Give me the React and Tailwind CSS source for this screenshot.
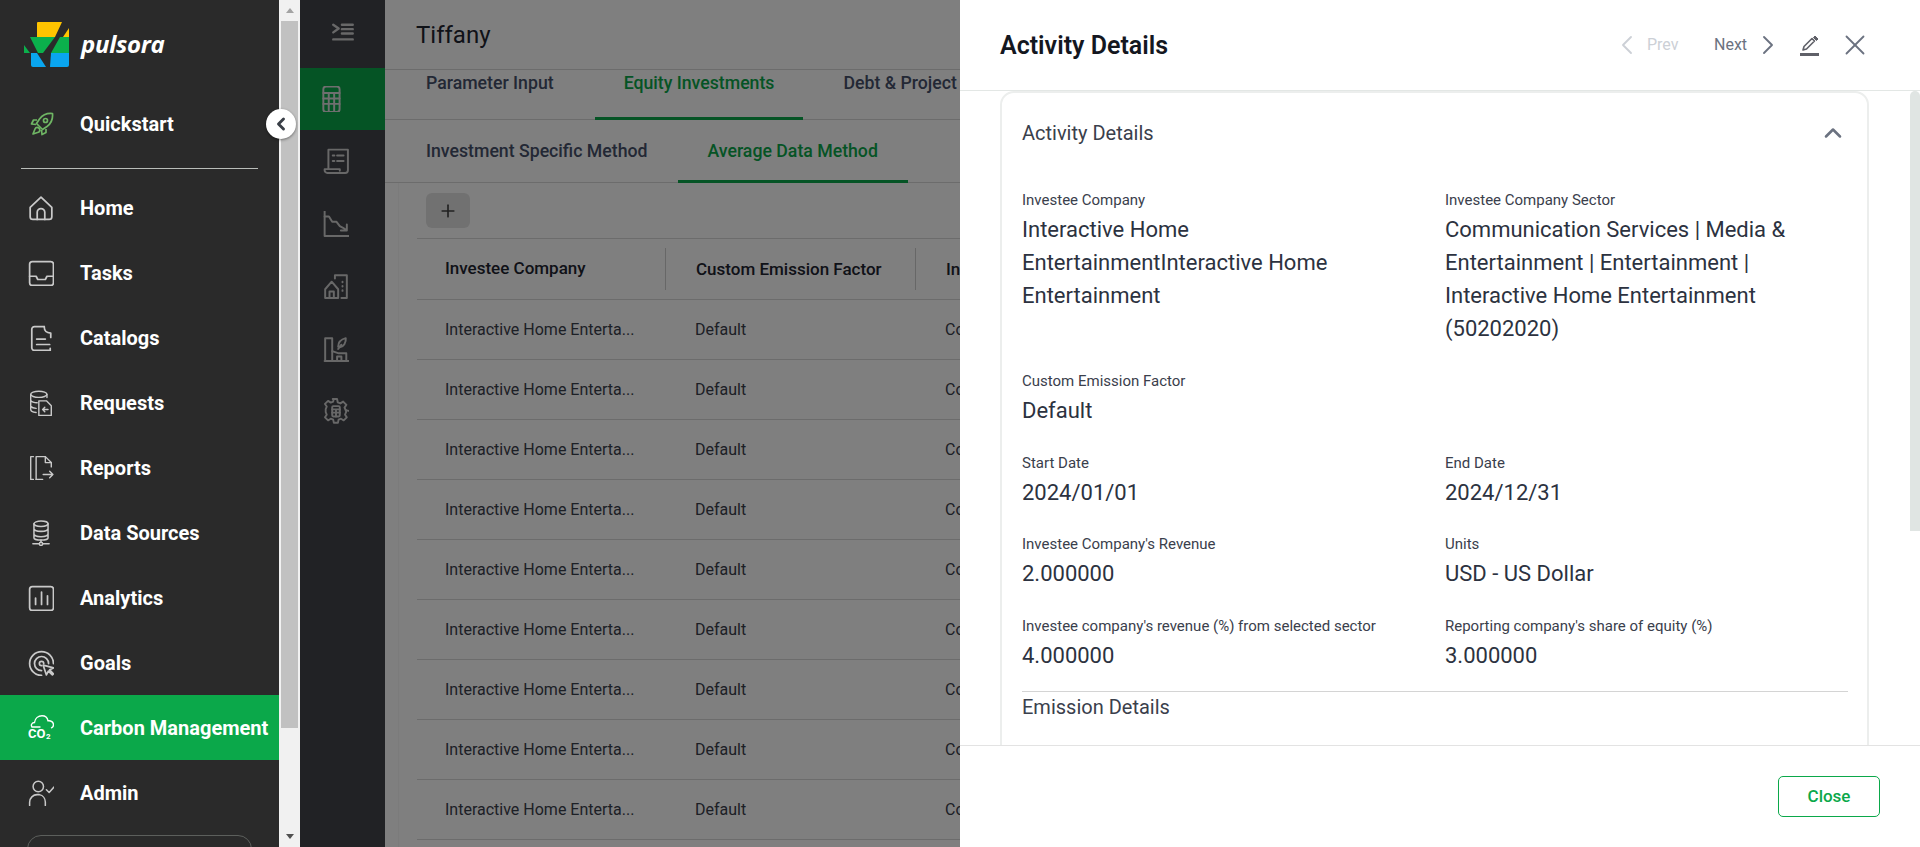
import React from "react";
import { ChevronLeft, ChevronRight, ChevronUp, Plus, X } from "lucide-react";

// sidebar icons, drawn on a 24 box
const Svg = ({ children, className = "w-[26px] h-[26px]", sw = 1.6 }) => (
  <svg viewBox="0 0 24 24" fill="none" stroke="currentColor" strokeWidth={sw} strokeLinecap="round" strokeLinejoin="round" className={className}>
    {children}
  </svg>
);

const navItems = [
  {
    label: "Home",
    icon: (
      <Svg>
        <path d="M2 11.500 12 2l10 9.500V20a2.500 2.500 0 0 1-2.500 2.500h-15A2.500 2.500 0 0 1 2 20z" />
        <path d="M8.500 22.500V16a3.500 3.500 0 0 1 7 0v6.500" />
      </Svg>
    ),
  },
  {
    label: "Tasks",
    icon: (
      <Svg>
        <rect x="1.500" y="1.500" width="22" height="22" rx="2.500" />
        <path d="M1.500 15h6l1.500 3h7l1.500-3h6" />
      </Svg>
    ),
  },
  {
    label: "Catalogs",
    icon: (
      <Svg>
        <path d="M15 1.500H6A2.500 2.500 0 0 0 3.500 4v17A2.500 2.500 0 0 0 6 23.500h14.500" />
        <path d="M15 1.500c0 4 1.500 5.500 6 6v4M20.500 21.500v2" />
        <path d="M8 13h8M8 18h12" />
      </Svg>
    ),
  },
  {
    label: "Requests",
    icon: (
      <Svg sw={1.3}>
        <ellipse cx="10" cy="4" rx="7.500" ry="2.800" />
        <path d="M2.500 4v14c0 1.500 2 2.500 5 2.800M17.500 4v3M2.500 9.500c1 1.500 3 2.200 6 2.200M2.500 15c1 1.200 2.500 1.800 5 2" />
        <path d="M10 10h7l4.500 4.500V23.500H10z" />
        <path d="M18.500 18h-5l2-2M13.500 18l2 2" />
      </Svg>
    ),
  },
  {
    label: "Reports",
    icon: (
      <Svg sw={1.3}>
        <path d="M5 1.500H2.500v21H5" />
        <path d="M7.500 22.500V1.500H16l5.500 5.500v4" />
        <path d="M16 1.500V7h5.500M7.500 22.500h6" />
        <path d="M14 18h9M20 15l3 3-3 3" />
      </Svg>
    ),
  },
  {
    label: "Data Sources",
    icon: (
      <Svg sw={1.4}>
        <ellipse cx="12" cy="3.500" rx="6.500" ry="2.500" />
        <path d="M5.500 3.500v13c0 1 3 2 6.500 2s6.500-1 6.500-2v-13M5.500 8c0 1.400 3 2.500 6.500 2.500s6.500-1.100 6.500-2.500M5.500 13c0 1.400 3 2.500 6.500 2.500s6.500-1.100 6.500-2.500" />
        <path d="M12 18.500v2" />
        <circle cx="12" cy="22" r="1.500" />
        <path d="M4.500 22h6M13.500 22h6" />
      </Svg>
    ),
  },
  {
    label: "Analytics",
    icon: (
      <Svg>
        <rect x="1.500" y="1.500" width="22" height="22" rx="2.500" />
        <path d="M7 18v-6M12.500 18V6.500M18 18v-8" />
      </Svg>
    ),
  },
  {
    label: "Goals",
    icon: (
      <Svg>
        <path d="M12.500 23.500a11 11 0 1 1 11-11" />
        <path d="M12.500 19a6.500 6.500 0 1 1 6.500-6.500" />
        <path d="M12.500 14.500a2 2 0 1 1 2-2" />
        <path d="M14 14l3 9 1.800-3.500 3.700 3.500 1-1-3.500-3.700 3.500-1.800z" fill="#2a2a2a" />
      </Svg>
    ),
  },
  {
    label: "Carbon Management",
    active: true,
    icon: (
      <svg viewBox="0 0 26 26" fill="none" className="w-[26px] h-[26px]">
        <path d="M4 12c-1.500-2 0-4.500 2.500-4.500C7 3 10.500 .8 14 .8c3 0 5.500 2 6 5 3-.5 5.500 1.500 5.500 4 0 1.500-.8 2.500-2 3M4 12h8" stroke="white" strokeWidth="1.400" strokeLinecap="round" />
        <text x="0" y="23" fill="white" fontFamily="Roboto" fontWeight="700" fontSize="13">CO</text>
        <text x="18" y="24" fill="white" fontFamily="Roboto" fontWeight="700" fontSize="8">2</text>
      </svg>
    ),
  },
  {
    label: "Admin",
    icon: (
      <Svg sw={1.4}>
        <circle cx="9.500" cy="6" r="4.800" />
        <path d="M1.500 23.500v-3A7 7 0 0 1 8.500 13.500h2a7 7 0 0 1 5.500 7v3" />
        <path d="M17 9l2.500 2.500L24 6.500" />
      </Svg>
    ),
  },
];

const rows = Array.from({ length: 9 });

const Field = ({ label, value, className = "" }) => (
  <div className={className}>
    <div className="text-[15px] leading-[20px] text-[#3a404c]">{label}</div>
    <div className="text-[22px] leading-[33px] text-[#2c3240] mt-[3px]">{value}</div>
  </div>
);

const Sidebar = () => (
  <aside className="relative flex w-[300px] shrink-0 h-full bg-[#2a2a2a] font-['Roboto',sans-serif]">
    <div className="w-[279px] h-full overflow-hidden">
      <div className="flex items-center h-[91px] pl-[24px] pb-[2px] gap-[11px]">
        <svg viewBox="0 0 46 46" className="w-[46px] h-[46px]">
          <path d="M14 0h24l-7 15H13V1a1 1 0 0 1 1-1z" fill="#ffc400" />
          <path d="M39 15l6-9v9z" fill="#ffc400" />
          <path d="M6 15h25L19 31h-5z" fill="#0bb04c" />
          <path d="M36 15h9v16H27z" fill="#0bb04c" />
          <path d="M0 23l6 8H0z" fill="#0bb04c" />
          <path d="M7 31h6l9 14H9a2 2 0 0 1-2-2z" fill="#0aa5ef" />
          <path d="M27 31h18v12a2 2 0 0 1-2 2H26z" fill="#0aa5ef" />
        </svg>
        <span className="text-white text-[24px] font-bold italic tracking-[-0.3px] font-['Open_Sans',sans-serif] -mt-[2px]">pulsora</span>
      </div>
      <div className="flex items-center h-[65px] pl-[30px] gap-[26px]">
        <svg viewBox="0 0 24 24" fill="none" stroke="#6fb564" strokeWidth="1.700" strokeLinejoin="round" className="w-[24px] h-[24px]">
          <path d="M22.500 1.500c-5-.5-10 1.500-13 5.500l-3 4.500 6 6 4.500-3c4-3 6-8 5.500-13z" />
          <circle cx="15.500" cy="8.500" r="2" />
          <path d="M7 8H3.500L1.500 12l4.500.5M16 17v3.500l-4 2-.5-4.500M5 17a2.500 2.500 0 1 1 2.500 3.500L3 22z" />
        </svg>
        <span className="text-white text-[20px] font-bold">Quickstart</span>
      </div>
      <div className="mx-[21px] mt-[12px] mb-[6px] border-t border-[#b9bdb9]" />
      {navItems.map((item) => (
        <div key={item.label} className={`flex items-center h-[65px] pl-[28px] gap-[26px] text-[#c9c9c9] ${item.active ? "bg-[#0ba84a]" : ""}`}>
          {item.icon}
          <span className="text-white text-[20px] font-bold whitespace-nowrap">{item.label}</span>
        </div>
      ))}
      <div className="mx-[27px] mt-[10px] h-[40px] rounded-[14px] border border-[#5c5f5c]" />
    </div>

    {/* page scrollbar */}
    <div className="flex flex-col items-center w-[21px] h-full bg-[#f1f1f1]">
      <div className="h-[21px] w-full flex items-center justify-center">
        <div className="w-0 h-0 border-x-[4px] border-x-transparent border-b-[5px] border-b-[#a3a3a3]" />
      </div>
      <div className="w-[17px] h-[707px] bg-[#c1c1c1]" />
      <div className="flex-1" />
      <div className="h-[21px] w-full flex items-center justify-center">
        <div className="w-0 h-0 border-x-[4px] border-x-transparent border-t-[5px] border-t-[#505050]" />
      </div>
    </div>

    <button className="absolute left-[266px] top-[109px] flex items-center justify-center w-[30px] h-[30px] rounded-full bg-white shadow-[0_1px_3px_rgba(0,0,0,0.45)] text-[#3a3f47]">
      <ChevronLeft size={20} strokeWidth={3.500} />
    </button>
  </aside>
);

const railIcon = "w-[26px] h-[26px] text-[#d0d0d0]";

const Rail = () => (
  <div className="flex flex-col w-[85px] shrink-0 h-full bg-[#42444a]">
    <div className="flex items-center justify-center h-[68px] pl-[1px]">
      <Svg className={railIcon} sw={2.200}>
        <path d="M3 3.500l5 3.500-5 3.500" />
        <path d="M11 3.500h10M11 7.500h10M11 11.500h10M3 17h18" />
      </Svg>
    </div>
    <div className="flex items-center h-[62px] pl-[19px] bg-[#0ba84a]">
      <Svg className="w-[26px] h-[26px] text-[#dedede]" sw={1.800}>
        <rect x="4" y="0.500" width="15" height="23.500" rx="2.500" />
        <path d="M4 6.500h15M4 11.500h15M4 16.500h15M9 6.500V24M14 6.500V24" />
      </Svg>
    </div>
    {[
      <g key="a">
        <path d="M5 19.500V1.500h18v19a2.500 2.500 0 0 1-2.500 2.500H4a2.500 2.500 0 0 1-2.500-2.500V19.500h14v1.500" />
        <path d="M9 7h1.500M13 7h6M9 12h1.500M13 12h6" />
      </g>,
      <g key="b">
        <path d="M1.500 0v23h23" />
        <path d="M1.500 5h4l3 5h4l3 4 3 1.500 3 2M22 12.500V18h-5.500" />
      </g>,
      <g key="c">
        <path d="M2 23v-8l6-7 6 7v8zM6 23v-6h4v6" />
        <path d="M11 5V2h11v21h-5M18 8v.5M18 12v.5M18 16v.5" />
      </g>,
      <g key="d">
        <path d="M2 2h6.500v21H1.500M1.500 23h22M2 2v21" />
        <path d="M8.500 14l6 2 7 0v7M13 23v-4h4v4" />
        <path d="M14 10c0-4 3-7 7-8 .5 4-2 8-5.500 8.500zM14 12l3-4" />
      </g>,
      <g key="e">
        <path d="M10 1h4l.6 3 2.400 1 2.600-1.700 3 3-1.700 2.600 1 2.400 3 .6" transform="translate(-1 0)" />
        <path d="M10 1l-.6 3-2.400 1-2.600-1.700-3 3 1.700 2.600-1 2.400v3l1 2.400-1.700 2.600 3 3 2.600-1.700 2.400 1 .6 3h4l.6-3 2.400-1 2.600 1.700 3-3-1.700-2.600 1-2.400v-2" transform="translate(.5 -.5) scale(.95)" />
        <rect x="8.500" y="7.500" width="7" height="9.500" rx="1" />
        <path d="M8.500 10.500h7M8.500 13.500h7M12 10.500V17" />
      </g>,
    ].map((g, i) => (
      <div key={i} className="flex items-center h-[62.500px] pl-[23px]">
        <Svg className={railIcon} sw={1.800}>{g}</Svg>
      </div>
    ))}
  </div>
);

const Table = () => (
  <div className="ml-[18px] border-t border-[#d9d9d9] font-['Roboto',sans-serif] whitespace-nowrap">
    <div className="flex items-center h-[61px] border-b border-[#d9d9d9] text-[17px] font-medium text-[#1e2430]">
      <div className="w-[248px] pl-[28px] shrink-0">Investee Company</div>
      <div className="w-[250px] shrink-0 pl-[30px] border-l border-[#cfcfcf] leading-[42px]">Custom Emission Factor</div>
      <div className="pl-[30px] border-l border-[#cfcfcf] leading-[42px]">Investee Company Sector</div>
    </div>
    {rows.map((_, i) => (
      <div key={i} className="flex items-center h-[60px] border-b border-[#d9d9d9] text-[16px] text-[#3a404c]">
        <div className="w-[248px] pl-[28px] shrink-0">Interactive Home Enterta...</div>
        <div className="w-[250px] pl-[30px] shrink-0">Default</div>
        <div className="pl-[30px]">Communication Services</div>
      </div>
    ))}
  </div>
);

const Main = () => (
  <main className="flex-1 min-w-0 h-full bg-white font-['Roboto',sans-serif] overflow-hidden">
    <div className="flex items-center h-[70px] pl-[31px] border-b border-[#d9d9d9] text-[24px] text-[#1e2430]">Tiffany</div>
    <div className="flex h-[50px] pl-[41px] border-b border-[#d9d9d9] text-[17.700px] font-medium text-[#46506a] whitespace-nowrap">
      <div className="pt-[2px] leading-[23px] mr-[41px]">Parameter Input</div>
      <div className="px-[29px] pt-[2px] leading-[23px] text-[#0ba84a] border-b-[3px] border-[#0ba84a] mr-[40px] h-[50px]">Equity Investments</div>
      <div className="pt-[2px] leading-[23px]">Debt &amp; Project Finance</div>
    </div>
    <div className="flex h-[63px] pl-[41px] border-b border-[#d9d9d9] text-[17.700px] font-medium text-[#46506a] whitespace-nowrap">
      <div className="pt-[18px] mr-[30px]">Investment Specific Method</div>
      <div className="pt-[18px] px-[30px] text-[#0ba84a] border-b-[3px] border-[#0ba84a] h-[63px]">Average Data Method</div>
    </div>
    <div className="ml-[13px] border-l border-[#f6f6f6] h-full">
      <div className="h-[55px] pl-[27px] pt-[10px]">
        <button className="flex items-center justify-center w-[44px] h-[35px] rounded-[6px] bg-[#e3e3e3] text-[#444]">
          <Plus size={20} strokeWidth={2} />
        </button>
      </div>
      <Table />
    </div>
  </main>
);

const Drawer = () => (
  <div className="absolute top-0 right-0 flex flex-col w-[960px] h-full bg-white font-['Roboto',sans-serif]">
    <div className="flex items-center h-[91px] shrink-0 pl-[40px] pr-[48px] border-b border-[#e3e7e5]">
      <h1 className="text-[25px] font-semibold text-[#14171f] mt-[1px]">Activity Details</h1>
      <div className="ml-auto flex items-center text-[16px]">
        <ChevronLeft size={32} strokeWidth={1.400} className="text-[#ccd0d6]" />
        <span className="ml-[4px] w-[31px] text-[#ccd0d6]">Prev</span>
        <span className="ml-[36px] w-[33px] text-[#6b7280]">Next</span>
        <ChevronRight size={32} strokeWidth={1.400} className="ml-[5px] text-[#6b7280]" />
        <svg viewBox="0 0 19 21" className="ml-[16px] w-[19px] h-[21px] text-[#5f6068]" fill="none" stroke="currentColor">
          <path d="M3 15l1-3.500L12 3.500l2.500 2.500-8 8z" strokeWidth="1.600" strokeLinejoin="round" />
          <path d="M13.500 2.500 15 1l3 3-1.500 1.500z" fill="currentColor" strokeWidth="1" />
          <path d="M0 19.500h19" strokeWidth="3" />
        </svg>
        <X size={34} strokeWidth={1.300} className="ml-[19px] text-[#6b7280]" />
      </div>
    </div>

    <div className="relative flex-1 min-h-0 overflow-hidden pl-[40px] pr-[51px]">
      <div className="h-[900px] border-2 border-[#eceeed] rounded-t-[14px] pl-[20px] pr-[19px]">
        <div className="flex items-center justify-between h-[80px] pb-[1px] text-[20px] text-[#3a404c]">
          <span>Activity Details</span>
          <ChevronUp size={28} strokeWidth={2.200} className="text-[#6b7280] mr-[1px]" />
        </div>
        <div className="grid grid-cols-[423px_1fr] pt-[17px]">
          <Field className="pr-[40px]" label="Investee Company" value="Interactive Home EntertainmentInteractive Home Entertainment" />
          <Field className="pr-[40px]" label="Investee Company Sector" value="Communication Services | Media & Entertainment | Entertainment | Interactive Home Entertainment (50202020)" />
          <Field className="pt-[26px] col-span-2" label="Custom Emission Factor" value="Default" />
          <Field className="pt-[26px]" label="Start Date" value="2024/01/01" />
          <Field className="pt-[26px]" label="End Date" value="2024/12/31" />
          <Field className="pt-[25px]" label="Investee Company's Revenue" value="2.000000" />
          <Field className="pt-[25px]" label="Units" value="USD - US Dollar" />
          <Field className="pt-[26px]" label="Investee company's revenue (%) from selected sector" value="4.000000" />
          <Field className="pt-[26px]" label="Reporting company's share of equity (%)" value="3.000000" />
        </div>
        <div className="mt-[19px] border-t border-[#d4d4d4] pt-[3px] text-[20px] leading-[24px] text-[#3a404c]">Emission Details</div>
      </div>
      <div className="absolute top-0 right-0 w-[10px] h-[440px] rounded-t-[5px] bg-[#e0e5e3]" />
    </div>

    <div className="flex items-center justify-end h-[102px] shrink-0 pr-[40px] border-t border-[#e3e3e3]">
      <button className="w-[102px] h-[41px] rounded-[5px] border border-[#0ba84a] bg-white text-[#0ba84a] text-[17px] font-medium">Close</button>
    </div>
  </div>
);

export default function App() {
  return (
    <div className="relative flex w-[1920px] h-[847px] overflow-hidden">
      <Sidebar />
      <div className="relative flex flex-1 min-w-0 h-full">
        <Rail />
        <Main />
        <div className="absolute inset-0 bg-black/50" />
      </div>
      <Drawer />
    </div>
  );
}
